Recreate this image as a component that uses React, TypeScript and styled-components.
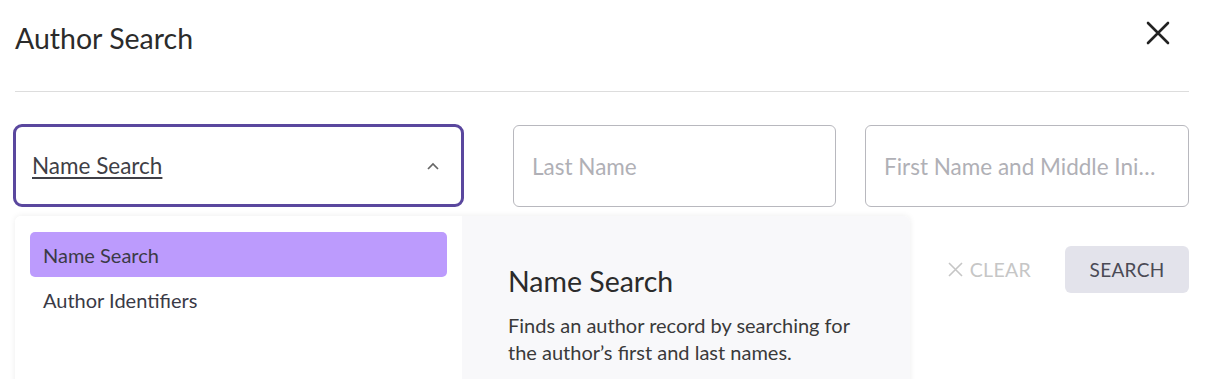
import styled, { createGlobalStyle } from "styled-components";

const GlobalStyle = createGlobalStyle`
    body {
        margin: 0;
        background: #ffffff;
        font-family: Lato, "Noto Sans", sans-serif;
        color: #333333;
    }
`;

const Page = styled.div`
    position: relative;
    width: 1219px;
    height: 379px;
    padding: 0 30px 0 15px;
    box-sizing: border-box;
    overflow: hidden;
`;

const Header = styled.header`
    height: 91px;
    display: flex;
    align-items: flex-start;
    justify-content: space-between;
    border-bottom: 1px solid #dddddd;
`;

const Title = styled.h1`
    margin: 21px 0 0;
    font-size: 28.5px;
    font-weight: 400;
    color: #2b2b2b;
`;

const CloseButton = styled.button`
    margin: 20px 18px 0 0;
    padding: 0;
    border: none;
    background: none;
    width: 26px;
    height: 26px;
    display: flex;
    align-items: center;
    justify-content: center;
    cursor: pointer;
`;

const FieldRow = styled.div`
    display: flex;
    margin-top: 32px;
`;

const SelectBox = styled.div`
    width: 451px;
    height: 83px;
    margin-left: -2px;
    box-sizing: border-box;
    border: 3px solid #5a479e;
    border-radius: 9px;
    display: flex;
    align-items: center;
    justify-content: space-between;
    padding: 0 22px 0 16px;
`;

const SelectValue = styled.span`
    font-size: 22.5px;
    color: #3f3f46;
    text-decoration: underline;
    text-underline-offset: 3px;
`;

const Input = styled.div<{ $width: number; $gap: number }>`
    width: ${(p) => p.$width}px;
    height: 82px;
    margin-top: 1px;
    margin-left: ${(p) => p.$gap}px;
    box-sizing: border-box;
    border: 1px solid #b8b8be;
    border-radius: 6px;
    display: flex;
    align-items: center;
    padding: 0 26px 0 18px;
    font-size: 22.5px;
    color: #b0b0b6;
    white-space: nowrap;
    overflow: hidden;
    span {
        overflow: hidden;
        text-overflow: ellipsis;
    }
`;

const ActionRow = styled.div`
    display: flex;
    justify-content: flex-end;
    align-items: center;
    margin-top: 39px;
    gap: 34px;
`;

const ClearButton = styled.button`
    display: flex;
    align-items: center;
    gap: 7px;
    border: none;
    background: none;
    padding: 0;
    font-family: inherit;
    font-size: 19.5px;
    color: #c6c6c6;
    letter-spacing: 0.3px;
`;

const SearchButton = styled.button`
    width: 124px;
    height: 47px;
    border: none;
    border-radius: 6px;
    background: #e3e3eb;
    font-family: inherit;
    font-size: 19px;
    color: #4a4a55;
    letter-spacing: 0.3px;
`;

const Popup = styled.div`
    position: absolute;
    left: 15px;
    top: 216px;
    width: 895px;
    height: 200px;
    display: flex;
    border-radius: 6px 6px 0 0;
    box-shadow: 0 0 6px rgba(0, 0, 0, 0.08);
    overflow: hidden;
`;

const OptionList = styled.ul`
    width: 447px;
    margin: 0;
    padding: 16px 15px;
    box-sizing: border-box;
    list-style: none;
    background: #ffffff;
`;

const Option = styled.li<{ $active?: boolean }>`
    height: 45px;
    display: flex;
    align-items: center;
    padding-left: 13px;
    border-radius: 5px;
    font-size: 20px;
    color: #3a3a46;
    background: ${(p) => (p.$active ? "#bc9bfd" : "transparent")};
`;

const Preview = styled.div`
    flex: 1;
    background: #f8f8fa;
    padding: 48px 46px 0;
`;

const PreviewTitle = styled.h2`
    margin: 0;
    font-size: 28.5px;
    font-weight: 400;
    color: #2b2b2b;
`;

const PreviewText = styled.p`
    margin: 14px 0 0;
    font-size: 20px;
    line-height: 27px;
    color: #3a3a3a;
`;

function App() {
    return (
        <Page>
            <GlobalStyle />
            <Header>
                <Title>Author Search</Title>
                <CloseButton aria-label="Close">
                    <svg width="24" height="24" viewBox="0 0 24 24">
                        <path d="M2 2L22 22M22 2L2 22" stroke="#222" strokeWidth="2.6" strokeLinecap="round" />
                    </svg>
                </CloseButton>
            </Header>
            <FieldRow>
                <SelectBox>
                    <SelectValue>Name Search</SelectValue>
                    <svg width="12" height="8" viewBox="0 0 12 8">
                        <path d="M1 7L6 2L11 7" stroke="#666" strokeWidth="1.7" fill="none" />
                    </svg>
                </SelectBox>
                <Input $width={323} $gap={49}>
                    <span>Last Name</span>
                </Input>
                <Input $width={324} $gap={29}>
                    <span>First Name and Middle Initial</span>
                </Input>
            </FieldRow>
            <ActionRow>
                <ClearButton>
                    <svg width="15" height="15" viewBox="0 0 15 15">
                        <path d="M1 1L14 14M14 1L1 14" stroke="#c6c6c6" strokeWidth="1.6" />
                    </svg>
                    CLEAR
                </ClearButton>
                <SearchButton>SEARCH</SearchButton>
            </ActionRow>
            <Popup>
                <OptionList>
                    <Option $active>Name Search</Option>
                    <Option>Author Identifiers</Option>
                </OptionList>
                <Preview>
                    <PreviewTitle>Name Search</PreviewTitle>
                    <PreviewText>
                        Finds an author record by searching for
                        <br />
                        the author’s first and last names.
                    </PreviewText>
                </Preview>
            </Popup>
        </Page>
    );
}

export default App;
